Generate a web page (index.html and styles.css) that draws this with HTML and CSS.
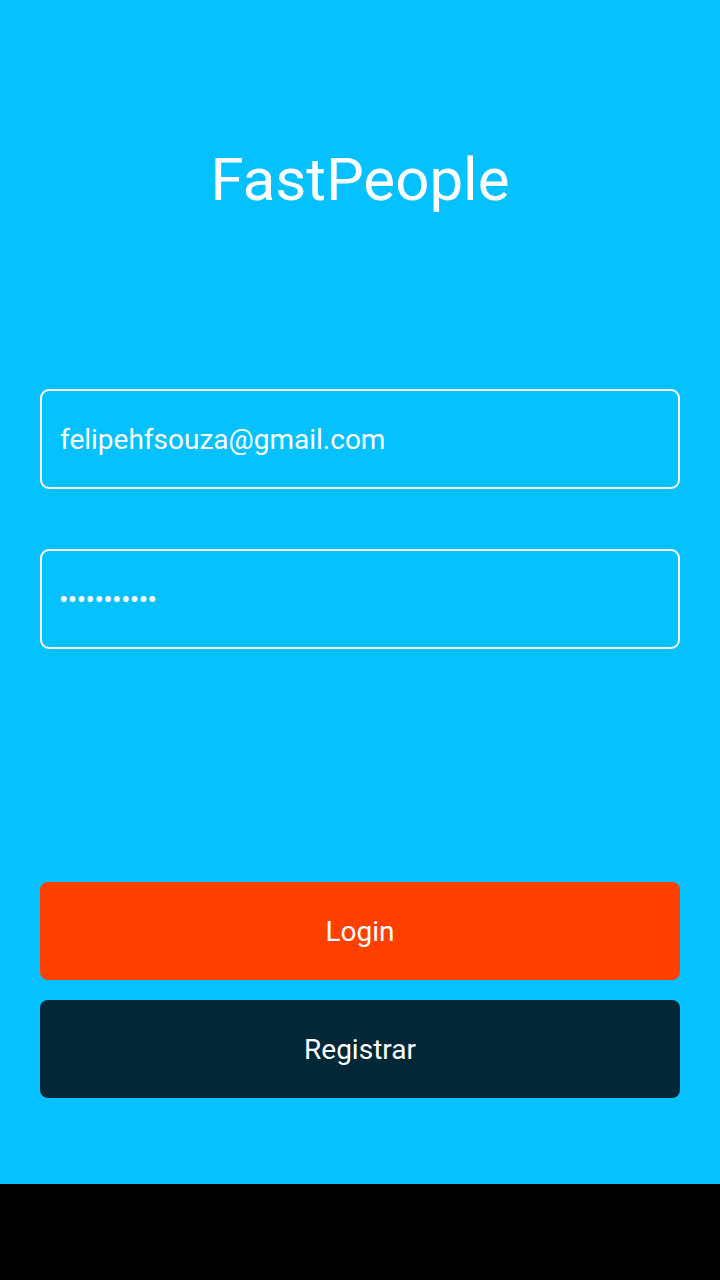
FILE: index.html
```html
<!DOCTYPE html>
<html lang="pt">
<head>
<meta charset="utf-8">
<title>FastPeople</title>
<link rel="stylesheet" href="styles.css">
</head>
<body>
<main class="screen">
  <h1 class="title">FastPeople</h1>
  <form class="form">
    <div class="field"><span class="field-text">felipehfsouza@gmail.com</span></div>
    <div class="field"><span class="field-text dots">•••••••••••</span></div>
  </form>
  <div class="actions">
    <button class="btn btn-login" type="button">Login</button>
    <button class="btn btn-register" type="button">Registrar</button>
  </div>
</main>
<div class="navbar"></div>
</body>
</html>
```
FILE: styles.css
```css
html, body {
  margin: 0;
  padding: 0;
  background: #000;
}
body {
  width: 720px;
  height: 1280px;
  font-family: Roboto, "Noto Sans", sans-serif;
  display: flex;
  flex-direction: column;
}
.screen {
  height: 1184px;
  background: #05c1ff;
  display: flex;
  flex-direction: column;
  padding: 0 40px;
  box-sizing: border-box;
}
.title {
  margin: 142px 0 0;
  height: 76px;
  line-height: 76px;
  font-size: 60px;
  font-weight: 400;
  color: #fff;
  text-align: center;
}
.form {
  margin-top: 171px;
  display: flex;
  flex-direction: column;
  gap: 60px;
}
.field {
  height: 100px;
  border: 2px solid #fff;
  border-radius: 9px;
  box-sizing: border-box;
  display: flex;
  align-items: center;
  padding: 0 18px;
}
.field-text {
  color: #fff;
  font-size: 28px;
}
.dots {
  letter-spacing: -0.6px;
  margin-left: -1px;
}
.actions {
  margin-top: 233px;
  display: flex;
  flex-direction: column;
  gap: 20px;
}
.btn {
  height: 98px;
  border: 0;
  border-radius: 8px;
  color: #fff;
  font-family: Roboto, "Noto Sans", sans-serif;
  font-size: 28px;
  padding: 0;
}
.btn-login {
  background: #ff4000;
}
.btn-register {
  background: #022736;
}
.navbar {
  height: 96px;
  background: #000;
}
```
